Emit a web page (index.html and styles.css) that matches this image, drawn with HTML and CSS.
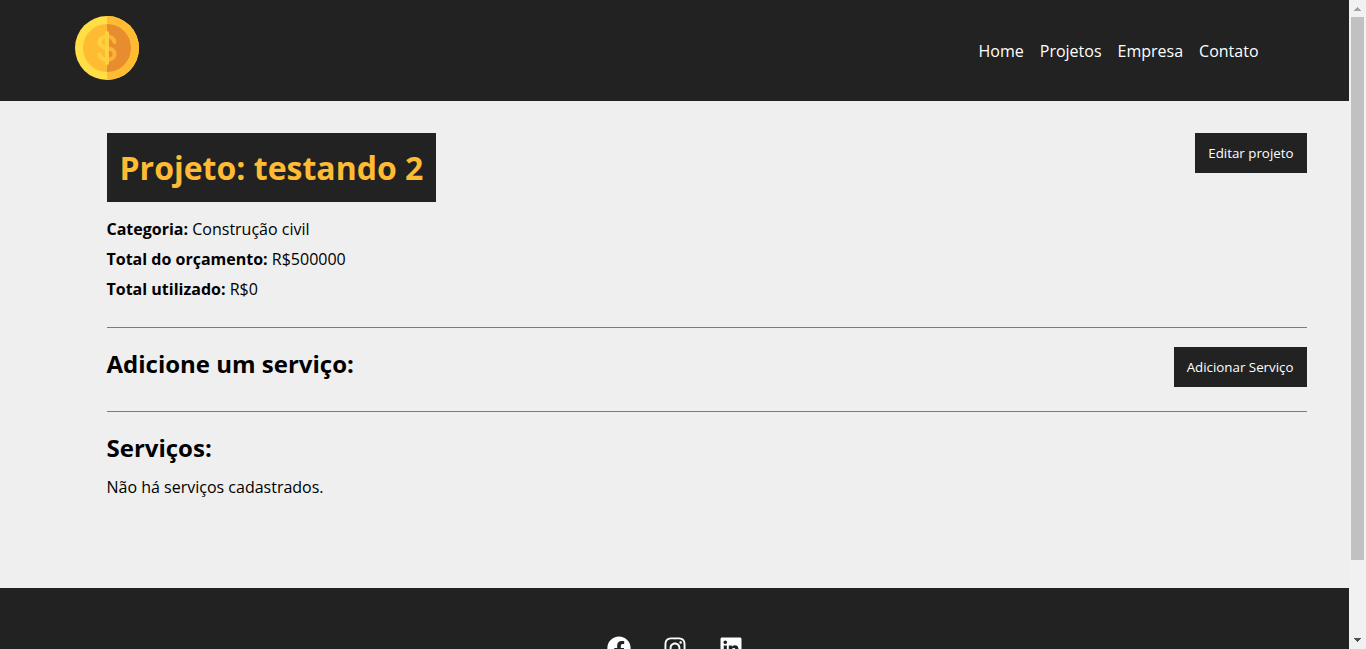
FILE: index.html
```html
<!DOCTYPE html>
<html lang="pt-BR">
<head>
<meta charset="utf-8">
<title>Costs</title>
<link rel="stylesheet" href="styles.css">
</head>
<body>
<div class="page">
  <header class="navbar">
    <div class="navbar-inner">
      <a class="logo" href="#" aria-label="Costs">
        <svg width="64" height="64" viewBox="0 0 64 64" aria-hidden="true">
          <circle cx="32" cy="32" r="32" fill="#ffde46"/>
          <path d="M32 0a32 32 0 0 1 0 64z" fill="#ffbc33"/>
          <path d="M32 8a24 24 0 0 0 0 48z" fill="#ffbc33"/>
          <path d="M32 8a24 24 0 0 1 0 48z" fill="#e88c30"/>
          <path d="M39.5 26c-.8-3.400-3.600-5.600-7.500-5.600M32 32c4.400.8 7.600 2.200 7.600 5.800s-3.200 6-7.600 6" fill="none" stroke="#fbb236" stroke-width="4" stroke-linecap="round"/>
          <path d="M32 20.400c-4.400 0-7.400 2.400-7.400 5.800 0 3.600 3 5 7.400 5.800M32 43.800c-4 0-6.800-2.200-7.500-5.600" fill="none" stroke="#ffd13e" stroke-width="4" stroke-linecap="round"/>
          <path d="M32 17v30" stroke="#ffd13e" stroke-width="4" stroke-linecap="round"/>
        </svg>
      </a>
      <nav>
        <ul class="menu">
          <li><a href="#">Home</a></li>
          <li><a href="#">Projetos</a></li>
          <li><a href="#">Empresa</a></li>
          <li><a href="#">Contato</a></li>
        </ul>
      </nav>
    </div>
  </header>
  <main class="main">
    <div class="container">
      <section class="section details">
        <div class="section-head">
          <h1 class="title">Projeto: testando 2</h1>
          <button class="btn" type="button">Editar projeto</button>
        </div>
        <div class="info">
          <p><strong>Categoria:</strong> Construção civil</p>
          <p><strong>Total do orçamento:</strong> R$500000</p>
          <p><strong>Total utilizado:</strong> R$0</p>
        </div>
      </section>
      <section class="section">
        <div class="section-head">
          <h2 class="subtitle">Adicione um serviço:</h2>
          <button class="btn" type="button">Adicionar Serviço</button>
        </div>
      </section>
      <section class="services">
        <h2 class="subtitle">Serviços:</h2>
        <p>Não há serviços cadastrados.</p>
      </section>
    </div>
  </main>
  <footer class="footer">
    <ul class="social">
      <li><a href="#" aria-label="Facebook"><svg width="24" height="24" viewBox="0 0 512 512" fill="currentColor"><path d="M504 256C504 119 393 8 256 8S8 119 8 256c0 123.78 90.69 226.38 209.25 245V327.69h-63V256h63v-54.64c0-62.15 37-96.48 93.67-96.48 27.14 0 55.52 4.84 55.52 4.84v61h-31.28c-30.8 0-40.41 19.12-40.41 38.73V256h68.78l-11 71.69h-57.78V501C413.31 482.38 504 379.78 504 256z"/></svg></a></li>
      <li><a href="#" aria-label="Instagram"><svg width="24" height="24" viewBox="0 0 448 512" fill="currentColor"><path d="M224.1 141c-63.6 0-114.9 51.3-114.9 114.9s51.3 114.9 114.9 114.9S339 319.5 339 255.9 287.7 141 224.1 141zm0 189.6c-41.1 0-74.7-33.5-74.7-74.7s33.5-74.7 74.7-74.7 74.7 33.5 74.7 74.7-33.6 74.7-74.7 74.7zm146.4-194.3c0 14.9-12 26.8-26.8 26.8-14.9 0-26.8-12-26.8-26.8s12-26.8 26.8-26.8 26.8 12 26.8 26.8zm76.1 27.2c-1.7-35.9-9.9-67.7-36.2-93.9-26.2-26.2-58-34.4-93.9-36.2-37-2.1-147.9-2.1-184.9 0-35.8 1.7-67.6 9.9-93.9 36.1s-34.4 58-36.2 93.9c-2.1 37-2.1 147.9 0 184.9 1.7 35.9 9.9 67.7 36.2 93.9s58 34.4 93.9 36.2c37 2.1 147.9 2.1 184.9 0 35.9-1.7 67.7-9.9 93.9-36.2 26.2-26.2 34.4-58 36.2-93.9 2.1-37 2.1-147.8 0-184.8zM398.8 388c-7.8 19.6-22.9 34.7-42.6 42.6-29.5 11.7-99.5 9-132.1 9s-102.7 2.6-132.1-9c-19.6-7.8-34.7-22.9-42.6-42.6-11.7-29.5-9-99.5-9-132.1s-2.6-102.7 9-132.1c7.8-19.6 22.9-34.7 42.6-42.6 29.5-11.7 99.5-9 132.1-9s102.7-2.6 132.1 9c19.6 7.8 34.7 22.9 42.6 42.6 11.7 29.5 9 99.5 9 132.1s2.7 102.7-9 132.1z"/></svg></a></li>
      <li><a href="#" aria-label="LinkedIn"><svg width="24" height="24" viewBox="0 0 448 512" fill="currentColor"><path d="M416 32H31.9C14.3 32 0 46.5 0 64.3v383.4C0 465.5 14.3 480 31.9 480H416c17.6 0 32-14.5 32-32.3V64.3c0-17.8-14.4-32.3-32-32.3zM135.4 416H69V202.2h66.5V416zm-33.2-243c-21.3 0-38.5-17.3-38.5-38.5S80.9 96 102.2 96c21.2 0 38.5 17.3 38.5 38.5 0 21.3-17.2 38.5-38.5 38.5zm282.1 243h-66.4V312c0-24.8-.5-56.7-34.5-56.7-34.6 0-39.9 27-39.9 54.9V416h-66.4V202.2h63.7v29.2h.9c8.9-16.8 30.6-34.5 62.9-34.5 67.2 0 79.7 44.3 79.7 101.9V416z"/></svg></a></li>
    </ul>
  </footer>
</div>
<div class="scrollbar" aria-hidden="true">
  <svg width="17" height="17" viewBox="0 0 17 17" shape-rendering="crispEdges"><path d="M8 7h1v1h1v1h1v1h1v1H5v-1h1V9h1V8h1z" fill="#a3a3a3"/></svg>
  <div class="track"><div class="thumb"></div></div>
  <svg width="17" height="17" viewBox="0 0 17 17" shape-rendering="crispEdges"><path d="M5 6h7v1h-1v1h-1v1H9v1H8V9H7V8H6V7H5z" fill="#505050"/></svg>
</div>
</body>
</html>
```

FILE: styles.css
```css
* {
  box-sizing: border-box;
  margin: 0;
  padding: 0;
}

body {
  display: flex;
  height: 100vh;
  overflow: hidden;
  background: #efefef;
  color: #000;
  font-family: "Open Sans", "Noto Sans", sans-serif;
  font-size: 16px;
  line-height: 22px;
}

ul {
  list-style: none;
}

a {
  color: inherit;
  text-decoration: none;
}

.page {
  flex: 1;
  display: flex;
  flex-direction: column;
  min-width: 0;
  overflow: hidden;
}

.navbar {
  flex: none;
  padding: 16px 0 21px;
  background: #222;
  color: #fff;
}

.navbar-inner {
  display: flex;
  justify-content: space-between;
  align-items: center;
  max-width: 1200px;
  margin: 0 auto;
}

.logo,
.social a {
  display: block;
}

.logo svg,
.social svg,
.scrollbar svg {
  display: block;
}

.menu {
  display: flex;
  gap: 16px;
  padding: 6px 16px 0 0;
}

.main {
  flex: none;
  min-height: 487px;
  padding: 32px 0 90px 64px;
}

.container {
  max-width: 1200px;
  margin: 0 auto;
}

.section {
  margin-bottom: 19px;
  padding-bottom: 24px;
  border-bottom: 1px solid #7b7b7b;
}

.details {
  padding-bottom: 27px;
}

.section-head {
  display: flex;
  justify-content: space-between;
  align-items: flex-start;
}

.title {
  padding: 13px;
  background: #222;
  color: #ffbb33;
  font-size: 32px;
  font-weight: 700;
  line-height: 43px;
}

.subtitle {
  font-size: 24px;
  font-weight: 700;
  line-height: 34px;
}

.btn {
  padding: 11px 13px;
  border: 0;
  background: #222;
  color: #fff;
  font-family: inherit;
  line-height: 18px;
  cursor: pointer;
}

.info {
  display: grid;
  gap: 8px;
  margin-top: 16px;
}

p {
  font-weight: 400;
}

strong {
  font-weight: 700;
}

.services {
  display: grid;
  gap: 11px;
}

.footer {
  flex: 1 0 auto;
  padding: 48px 0;
  background: #222;
  color: #fff;
}

.social {
  display: flex;
  justify-content: center;
  gap: 32px;
}

.scrollbar {
  flex: none;
  display: flex;
  flex-direction: column;
  width: 17px;
  background: #f1f1f1;
}

.track {
  flex: 1;
  padding: 0 2px;
}

.thumb {
  height: 88.3%;
  background: #c1c1c1;
}
```
